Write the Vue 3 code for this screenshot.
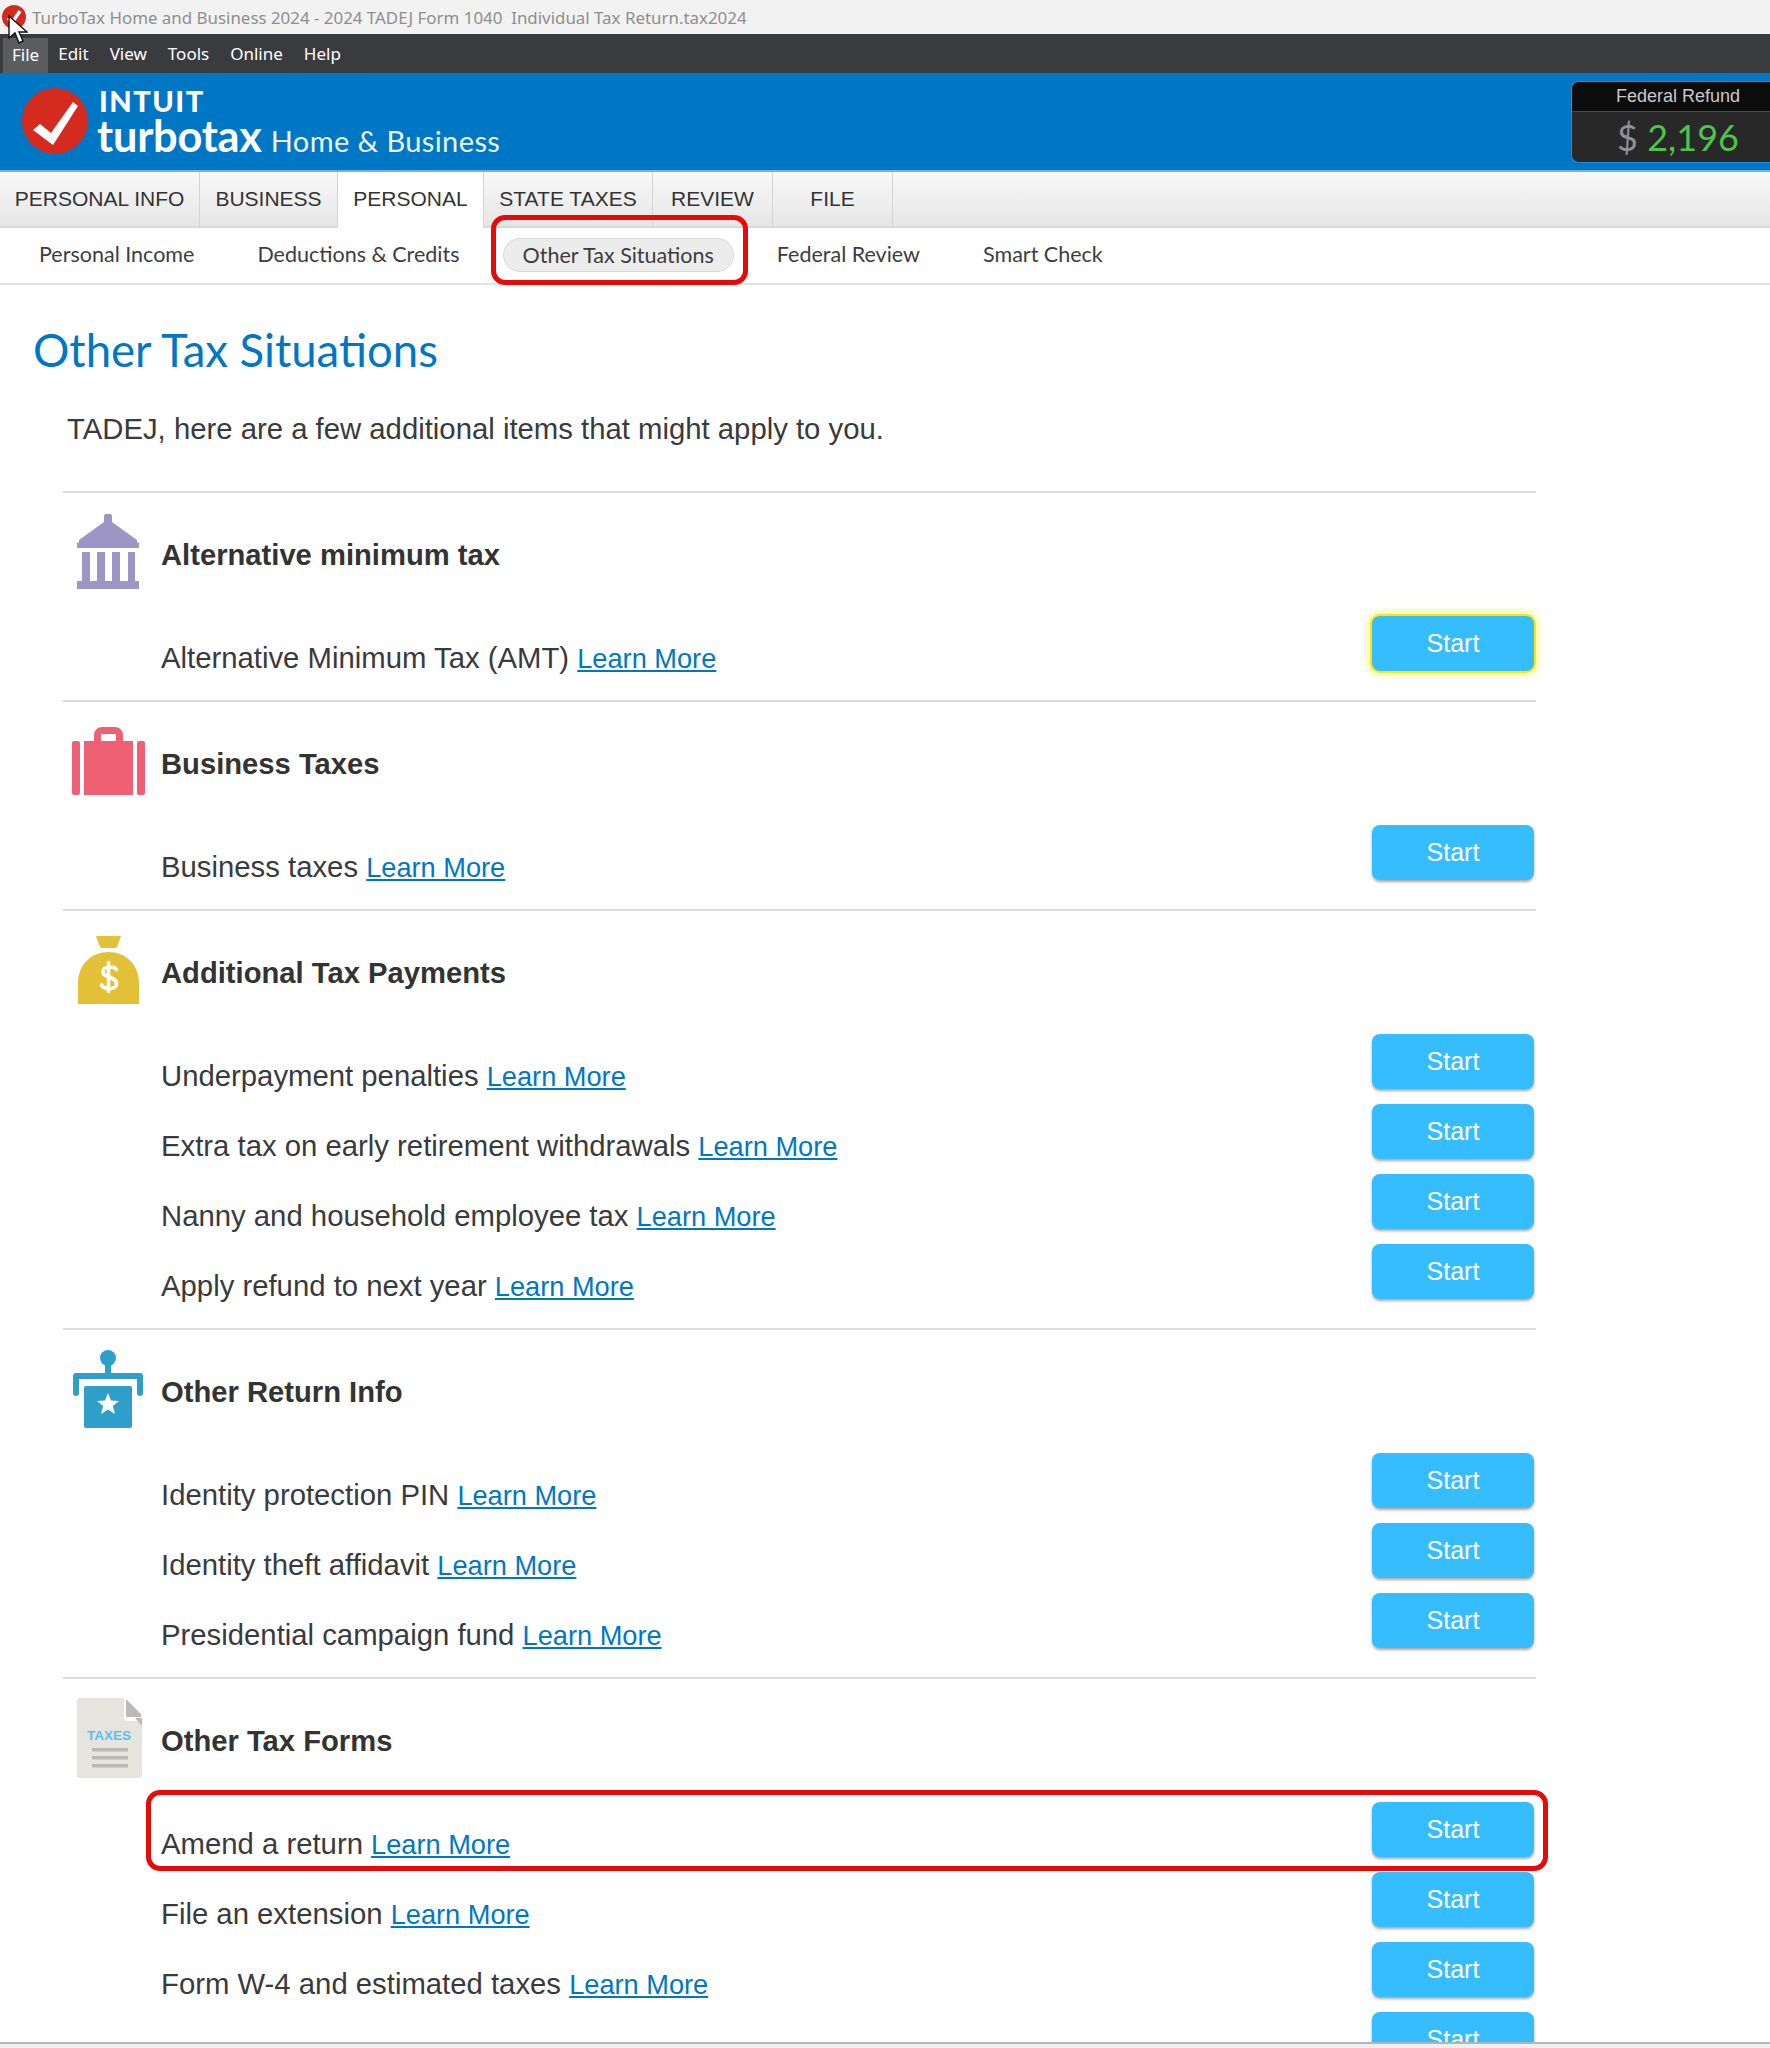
<script setup>
const menus = ['File', 'Edit', 'View', 'Tools', 'Online', 'Help']
const tabs = [
  { label: 'PERSONAL INFO', w: 200 },
  { label: 'BUSINESS', w: 138 },
  { label: 'PERSONAL', w: 146, active: true },
  { label: 'STATE TAXES', w: 169 },
  { label: 'REVIEW', w: 120 },
  { label: 'FILE', w: 120 }
]
const subnav = [
  { label: 'Personal Income' },
  { label: 'Deductions & Credits' },
  { label: 'Other Tax Situations', active: true },
  { label: 'Federal Review' },
  { label: 'Smart Check' }
]
const sections = [
  { icon: 'bank', title: 'Alternative minimum tax', rows: ['Alternative Minimum Tax (AMT)'] },
  { icon: 'bag', title: 'Business Taxes', rows: ['Business taxes'] },
  { icon: 'money', title: 'Additional Tax Payments', rows: ['Underpayment penalties', 'Extra tax on early retirement withdrawals', 'Nanny and household employee tax', 'Apply refund to next year'] },
  { icon: 'podium', title: 'Other Return Info', rows: ['Identity protection PIN', 'Identity theft affidavit', 'Presidential campaign fund'] },
  { icon: 'doc', title: 'Other Tax Forms', rows: ['Amend a return', 'File an extension', 'Form W-4 and estimated taxes', ''] }
]
</script>

<template>
  <div class="app">
    <div class="titlebar">
      <svg class="title-icon" width="24" height="24" viewBox="0 0 24 24">
        <circle cx="12" cy="12" r="12" fill="#d52b1e" />
        <path d="M6 13l4 5 8-12" fill="none" stroke="#fff" stroke-width="3.4" />
      </svg>
      <span>TurboTax Home and Business 2024 - 2024 TADEJ Form 1040&nbsp; Individual Tax Return.tax2024</span>
    </div>
    <svg class="cursor" width="20" height="30" viewBox="0 0 20 30">
      <path d="M1 1v22l6-5 4 10 4-2-4-9h8z" fill="#fff" stroke="#111" stroke-width="1.4" />
    </svg>

    <div class="menubar">
      <span v-for="(m, i) in menus" :key="m" class="menu" :class="{ on: i === 0 }">{{ m }}</span>
    </div>

    <header class="brand">
      <svg class="logo" width="68" height="68" viewBox="0 0 68 68">
        <circle cx="34" cy="34" r="33" fill="#d52b1e" />
        <path d="M12 43l7-6 11 9 22-31 5 4-25 39z" fill="#fff" />
      </svg>
      <div class="wordmark">
        <div class="intuit">INTUIT</div>
        <div class="product"><span class="turbotax">turbotax</span><span class="edition">Home &amp; Business</span></div>
      </div>
      <div class="refund">
        <div class="refund-label">Federal Refund</div>
        <div class="refund-value"><span class="dollar">$</span> <span class="amount">2,196</span></div>
      </div>
    </header>

    <nav class="tabs">
      <div v-for="t in tabs" :key="t.label" class="tab" :class="{ active: t.active }" :style="{ width: t.w + 'px' }">{{ t.label }}</div>
    </nav>

    <nav class="subnav">
      <div v-for="s in subnav" :key="s.label" class="subitem" :class="{ active: s.active }">{{ s.label }}</div>
    </nav>

    <main class="content">
      <h1>Other Tax Situations</h1>
      <p class="intro">TADEJ, here are a few additional items that might apply to you.</p>

      <section v-for="sec in sections" :key="sec.title" class="section">
        <div class="head">
          <div class="iconbox">
            <svg v-if="sec.icon === 'bank'" width="62" height="75" viewBox="0 0 62 75" fill="#9d95c4">
              <path d="M27 3a4 4 0 0 1 8 0v5l25 18v2.500h2V34H0v-5.500h2V26l25-18z" />
              <rect x="5" y="38" width="8" height="30" />
              <rect x="20" y="38" width="8" height="30" />
              <rect x="35" y="38" width="8" height="30" />
              <rect x="51" y="38" width="7" height="30" />
              <rect y="67" width="62" height="8" />
            </svg>
            <svg v-else-if="sec.icon === 'bag'" width="73" height="69" viewBox="0 0 73 69" fill="#ef6074">
              <rect y="15" width="8" height="54" rx="2" />
              <rect x="65" y="15" width="8" height="54" rx="2" />
              <path d="M12 15h10V9a8 8 0 0 1 8-8h13a8 8 0 0 1 8 8v6h10v54H12zM29 8v7h15V8z" fill-rule="evenodd" />
            </svg>
            <svg v-else-if="sec.icon === 'money'" width="61" height="68" viewBox="0 0 61 68" fill="#e3c137">
              <path d="M18 0h25l-4 11a3 3 0 0 1-3 1H25a3 3 0 0 1-3-1z" />
              <path d="M0 68V47C0 28 14 16 30.500 16S61 28 61 47v21z" />
              <path d="M38.500 33.500c-2-3-12-4-13.500 1.500-1.500 7 14 5 13.500 13-.5 6-12 6-15 1M30.500 26.500v29" fill="none" stroke="#fff" stroke-width="3.600" stroke-linecap="round" />
            </svg>
            <svg v-else-if="sec.icon === 'podium'" width="70" height="78" viewBox="0 0 70 78" fill="#2f9fc9">
              <circle cx="35" cy="8" r="8" />
              <rect x="32" y="12" width="6" height="12" />
              <path d="M3 23h64a3 3 0 0 1 3 3v17a3 3 0 0 1-6 0V29H6v14a3 3 0 0 1-6 0V26a3 3 0 0 1 3-3z" />
              <path d="M14 36h44a2 2 0 0 1 2 2v38a2 2 0 0 1-2 2H14a2 2 0 0 1-2-2V38a2 2 0 0 1 2-2z" transform="translate(-1)" />
              <path d="M35 43l3 7.500 8 .5-6.200 5 2.200 8-7-4.500-7 4.500 2.200-8-6.200-5 8-.5z" fill="#fff" />
            </svg>
            <svg v-else class="doc" width="65" height="80" viewBox="0 0 65 80">
              <path d="M3 0h44v20a3 3 0 0 0 3 3h15v54a3 3 0 0 1-3 3H3a3 3 0 0 1-3-3V3a3 3 0 0 1 3-3z" fill="#e5e4df" />
              <path d="M49 1l15 15v3H50a1 1 0 0 1-1-1z" fill="#bdbbb3" />
              <path d="M58 20h7v8z" fill="#bdbbb3" />
              <text x="32" y="42" class="doc-text">TAXES</text>
              <rect x="15" y="50" width="36" height="3.500" fill="#b9b8b1" />
              <rect x="15" y="58" width="36" height="3.500" fill="#b9b8b1" />
              <rect x="15" y="66" width="36" height="3.500" fill="#b9b8b1" />
            </svg>
          </div>
          <h2>{{ sec.title }}</h2>
        </div>
        <div v-for="(r, i) in sec.rows" :key="i" class="row">
          <div class="row-text" v-if="r">{{ r }} <a href="#">Learn More</a></div>
          <button class="start" :class="{ focus: sec.icon === 'bank' }">Start</button>
        </div>
      </section>
    </main>

    <div class="statusbar"></div>

    <div class="callout c1"></div>
    <div class="callout c2"></div>
  </div>
</template>

<style>
html, body { margin: 0; background: #fff; }
</style>

<style scoped>
.app {
  position: relative;
  width: 1770px;
  height: 2048px;
  overflow: hidden;
  display: flex;
  flex-direction: column;
  font-family: "Liberation Sans", Arial, sans-serif;
  color: #393a3d;
  background: #fff;
}
.titlebar {
  height: 34px;
  flex: none;
  background: #f2f2f2;
  display: flex;
  align-items: center;
  padding-left: 2px;
  color: #8e8e8e;
  font: 16.900px "Noto Sans", sans-serif;
  white-space: pre;
}
.title-icon { margin-right: 6px; flex: none; }
.cursor { position: absolute; left: 8px; top: 15px; }
.menubar {
  height: 39px;
  flex: none;
  background: #3a3b3f;
  display: flex;
  align-items: center;
  padding-left: 3px;
  color: #fff;
  font: 17px "Noto Sans", sans-serif;
}
.menu { height: 35px; line-height: 36px; padding: 0 9px; margin-right: 3px; }
.menu.on { background: #5c5d60; margin-top: 3px; margin-right: 1px; line-height: 34px; }
.brand {
  height: 99px;
  flex: none;
  background: #0077c5;
  border-bottom: 2px solid #6db3e6;
  box-sizing: border-box;
  display: flex;
  align-items: flex-start;
  color: #fff;
}
.logo { margin: 14px 0 0 21px; flex: none; }
.wordmark { margin-left: 8px; font-family: Lato, sans-serif; }
.intuit { font-size: 29px; font-weight: 900; line-height: 28px; margin-top: 14px; margin-left: 2px; letter-spacing: 1.5px; }
.product { display: flex; align-items: baseline; }
.turbotax { font-size: 43.300px; line-height: 40px; font-weight: 700; letter-spacing: -.2px; }
.edition { font-size: 29px; margin-left: 9px; letter-spacing: .4px; opacity: .92; }
.refund {
  margin: 8px 0 0 auto;
  width: 199px;
  height: 82px;
  box-sizing: border-box;
  border: 1px solid #2a8cd0;
  border-right: 0;
  border-radius: 8px 0 0 8px;
  overflow: hidden;
  background: #282828;
}
.refund-label {
  height: 29px;
  background: #0c0c0c;
  border-bottom: 1px solid #4a4a4a;
  color: #c9c9c9;
  font-size: 18px;
  line-height: 28px;
  text-align: center;
  padding-left: 14px;
}
.refund-value {
  text-align: center;
  font: 400 36px/50px Lato, sans-serif;
  padding-left: 14px;
}
.dollar { color: #8d9097; }
.amount { color: #4fc24f; }
.tabs {
  height: 56px;
  flex: none;
  display: flex;
  background: linear-gradient(#f8f8f8, #e6e6e6);
  border-bottom: 2px solid #d9d9d9;
  box-sizing: border-box;
}
.tab {
  box-sizing: border-box;
  border-right: 1px solid #d4d4d4;
  font-size: 21px;
  line-height: 54px;
  text-align: center;
  color: #333;
}
.tab.active { background: #fff; height: 56px; position: relative; }
.subnav {
  height: 57px;
  flex: none;
  box-sizing: border-box;
  border-bottom: 2px solid #e2e2e2;
  display: flex;
  align-items: center;
  gap: 23px;
  padding: 0 0 2px 19px;
  font: 21.500px Lato, sans-serif;
  color: #3c3d40;
}
.subitem { padding: 0 20px; height: 34px; line-height: 33px; box-sizing: border-box; }
.subitem.active { background: #ececec; border: 1px solid #d8d8d8; border-radius: 17px; padding: 0 19px; }
.content { flex: 1; min-height: 0; overflow: hidden; padding: 0 234px 0 63px; }
h1 {
  margin: 39px 0 0 -30px;
  font: 400 45.500px/52px Lato, sans-serif;
  color: #0077c5;
}
.intro { margin: 35px 0 0 4px; font-size: 29.300px; line-height: 36px; height: 80px; }
.section { border-top: 2px solid #dcdcdc; padding-bottom: 14px; }
.head { height: 123px; display: flex; align-items: center; }
.iconbox { width: 90px; flex: none; display: flex; justify-content: center; margin-right: 8px; margin-top: -6px; }
.doc { margin-left: 3px; }
h2 { margin: 2px 0 0; font-size: 29.200px; font-weight: 700; color: #333; }
.row { display: flex; justify-content: space-between; align-items: flex-start; padding-left: 98px; height: 70px; }
.row-text { font-size: 29.300px; line-height: 36px; margin-top: 24px; }
.row-text a { color: #0077c5; text-decoration: underline; font-size: 27.200px; }
.start {
  width: 162px;
  height: 55px;
  margin: 0 2px 0 auto;
  border: 0;
  border-radius: 8px;
  background: #36bdff;
  color: #fff;
  font: 25px "Liberation Sans", Arial, sans-serif;
  box-shadow: 0 2px 3px rgba(0, 0, 0, .35);
  padding: 0;
}
.start.focus { box-shadow: 0 0 0 2px #ffe600, 0 0 7px 4px rgba(255, 230, 0, .45); }
.doc-text { font: 700 13.500px "Liberation Sans", sans-serif; fill: #58c0f0; text-anchor: middle; }
.statusbar { height: 6px; flex: none; background: #f0f0f0; border-top: 2px solid #b5b5b5; box-sizing: border-box; }
.callout { position: absolute; box-sizing: border-box; border: 5px solid #e60a0a; border-radius: 14px; pointer-events: none; }
.c1 { left: 491px; top: 215px; width: 257px; height: 70px; }
.c2 { left: 146px; top: 1790px; width: 1402px; height: 81px; }
</style>
